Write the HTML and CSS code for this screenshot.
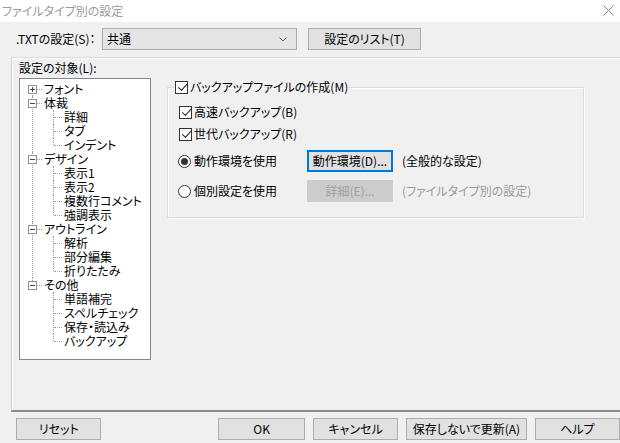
FILE: index.html
```html
<!DOCTYPE html>
<html lang="ja">
<head>
    <meta charset="UTF-8">
    <title>ファイルタイプ別の設定</title>
    <link rel="stylesheet" href="styles.css">
</head>
<body>
    <div class="titlebar">
        <span class="title">ファイルタイプ別の設定</span>
        <svg class="close" width="11" height="11" viewBox="0 0 11 11">
            <path d="M0.5 0.5 L10.5 10.5 M10.5 0.5 L0.5 10.5" stroke="#8a8a8a" stroke-width="1" fill="none"/>
        </svg>
    </div>

    <div class="top-row">
        <span class="top-label">.TXTの設定(S)：</span>
        <div class="combo">
            <span>共通</span>
            <svg class="chev" width="8" height="5" viewBox="0 0 8 5">
                <path d="M0.5 0.5 L4 4 L7.5 0.5" stroke="#5a5a5a" stroke-width="1" fill="none"/>
            </svg>
        </div>
        <button class="btn list-btn">設定のリスト(T)</button>
    </div>

    <div class="frame">
        <div class="target">
            <div class="target-label">設定の対象(L):</div>
            <ul class="tree">
                <li class="root"><div class="item"><span class="exp plus"></span>フォント</div></li>
                <li class="root"><div class="item"><span class="exp"></span>体裁</div>
                    <ul>
                        <li><div class="item">詳細</div></li>
                        <li><div class="item">タブ</div></li>
                        <li><div class="item">インデント</div></li>
                    </ul>
                </li>
                <li class="root"><div class="item"><span class="exp"></span>デザイン</div>
                    <ul>
                        <li><div class="item">表示1</div></li>
                        <li><div class="item">表示2</div></li>
                        <li><div class="item">複数行コメント</div></li>
                        <li><div class="item">強調表示</div></li>
                    </ul>
                </li>
                <li class="root"><div class="item"><span class="exp"></span>アウトライン</div>
                    <ul>
                        <li><div class="item">解析</div></li>
                        <li><div class="item">部分編集</div></li>
                        <li><div class="item">折りたたみ</div></li>
                    </ul>
                </li>
                <li class="root"><div class="item"><span class="exp"></span>その他</div>
                    <ul>
                        <li><div class="item">単語補完</div></li>
                        <li><div class="item">スペルチェック</div></li>
                        <li><div class="item">保存・読込み</div></li>
                        <li><div class="item">バックアップ</div></li>
                    </ul>
                </li>
            </ul>
        </div>

        <fieldset class="group">
            <legend><span class="check on"></span>バックアップファイルの作成(M)</legend>
            <div class="row"><span class="check on"></span>高速バックアップ(B)</div>
            <div class="row"><span class="check on"></span>世代バックアップ(R)</div>
            <div class="row radio-row first">
                <span class="radio-label"><span class="radio on"></span>動作環境を使用</span>
                <button class="btn focus">動作環境(D)...</button>
                <span class="note">(全般的な設定)</span>
            </div>
            <div class="row radio-row second">
                <span class="radio-label"><span class="radio"></span>個別設定を使用</span>
                <button class="btn disabled">詳細(E)...</button>
                <span class="note dim">(ファイルタイプ別の設定)</span>
            </div>
        </fieldset>
    </div>

    <div class="buttons">
        <button class="btn">リセット</button>
        <button class="btn ok">OK</button>
        <button class="btn">キャンセル</button>
        <button class="btn wide">保存しないで更新(A)</button>
        <button class="btn">ヘルプ</button>
    </div>
</body>
</html>
```

FILE: styles.css
```css
body {
    margin: 0;
    width: 620px;
    height: 443px;
    overflow: hidden;
    background: #f0f0f0;
    font-family: "Noto Sans CJK JP", "Liberation Sans", sans-serif;
    font-feature-settings: "palt";
    font-size: 12px;
    line-height: 14px;
    color: #000;
}
.titlebar {
    height: 22px;
    background: #fff;
    display: flex;
    align-items: center;
    justify-content: space-between;
    padding: 0 6px 0 2px;
}
.title {
    color: #9a9a9a;
    font-size: 12px;
}
.close {
    margin-top: -1px;
}

/* top row */
.top-row {
    display: flex;
    align-items: center;
    height: 22px;
    padding: 6px 0 0 16px;
}
.top-label {
    width: 86px;
}
.combo {
    box-sizing: border-box;
    width: 195px;
    height: 22px;
    border: 1px solid #adadad;
    background: #e5e5e5;
    display: flex;
    align-items: center;
    justify-content: space-between;
    padding: 0 9px 0 4px;
}
.btn {
    box-sizing: border-box;
    width: 86px;
    height: 22px;
    border: 1px solid #adadad;
    background: #e1e1e1;
    font: inherit;
    color: #000;
    padding: 0;
    line-height: 18px;
}
.list-btn {
    width: 113px;
    margin-left: 11px;
}

/* frame */
.frame {
    margin: 7px 0 0 11px;
    height: 352px;
    border-top: 1px solid #dadada;
    border-left: 1px solid #d0d0d0;
    border-bottom: 2px solid #8c8c8c;
    box-shadow: inset 1px 1px 0 #fff;
    display: flex;
    align-items: flex-start;
    padding-left: 7px;
}
.target-label {
    margin-top: 3px;
}
.tree {
    box-sizing: border-box;
    width: 132px;
    height: 282px;
    margin: 3px 0 0;
    padding: 3px 0 0;
    border: 1px solid #828790;
    background: #fff;
    list-style: none;
}
.tree ul {
    list-style: none;
    margin: 0;
    padding: 0;
}
.tree li {
    position: relative;
}
.tree li::after {
    content: "";
    position: absolute;
    left: 12px;
    top: 0;
    bottom: 0;
    border-left: 1px dotted #a0a0a0;
}
.tree li:last-child::after {
    bottom: auto;
    height: 7px;
}
.tree > li:first-child::after {
    top: 7px;
}
.tree ul li::after {
    left: 33px;
}
.item {
    position: relative;
    height: 14px;
    padding-left: 24px;
    white-space: nowrap;
}
.item::before {
    content: "";
    position: absolute;
    left: 13px;
    top: 7px;
    width: 9px;
    border-top: 1px dotted #a0a0a0;
}
.tree ul .item {
    padding-left: 44px;
}
.tree ul .item::before {
    left: 34px;
    width: 8px;
}
.exp {
    position: absolute;
    z-index: 1;
    left: 8px;
    top: 3px;
    box-sizing: border-box;
    width: 9px;
    height: 9px;
    border: 1px solid #919191;
    background: #fff;
}
.exp::before {
    content: "";
    position: absolute;
    left: 1px;
    top: 3px;
    width: 5px;
    height: 1px;
    background: #4a4a4a;
}
.exp.plus::after {
    content: "";
    position: absolute;
    left: 3px;
    top: 1px;
    width: 1px;
    height: 5px;
    background: #4a4a4a;
}

/* group box */
.group {
    box-sizing: border-box;
    width: 417px;
    margin: 22px 0 0 16px;
    padding: 7px 11px 15px 11px;
    border: 1px solid #dcdcdc;
    box-shadow: inset 1px 1px 0 #fff, 1px 1px 0 #fff;
    min-width: 0;
}
.group legend {
    display: flex;
    align-items: center;
    height: 14px;
    padding: 0 1px;
    margin-left: -5px;
}
.row {
    display: flex;
    align-items: center;
    height: 22px;
}
.check, .radio {
    box-sizing: border-box;
    width: 13px;
    height: 13px;
    border: 1px solid #333;
    background: #fff;
    margin-right: 2px;
    flex: none;
    position: relative;
}
.check.on::after {
    content: "";
    position: absolute;
    left: 1px;
    top: 0;
    width: 8px;
    height: 4px;
    border-left: 1px solid #222;
    border-bottom: 1px solid #222;
    transform: translate(1px, 2px) rotate(-48deg);
    transform-origin: 4px 2px;
}
.radio {
    border-radius: 50%;
    margin-left: -1px;
    margin-right: 3px;
}
.radio.on::after {
    content: "";
    position: absolute;
    left: 2px;
    top: 2px;
    width: 7px;
    height: 7px;
    border-radius: 50%;
    background: #333;
}
.radio-row.first {
    margin-top: 5px;
}
.radio-row.second {
    margin-top: 8px;
}
.radio-label {
    display: flex;
    align-items: center;
    width: 128px;
}
.btn.focus {
    border-color: #0078d7;
    box-shadow: inset 0 0 0 1px #0078d7;
}
.btn.disabled {
    background: #cccccc;
    border-color: #cccccc;
    color: #a0a0a0;
}
.note {
    margin-left: 9px;
}
.note.dim {
    color: #9a9a9a;
}

/* bottom buttons */
.buttons {
    display: flex;
    gap: 8px;
    padding: 6px 0 0 16px;
}
.buttons .ok {
    width: 87px;
    margin-left: 109px;
}
.buttons .wide {
    width: 121px;
}
```
